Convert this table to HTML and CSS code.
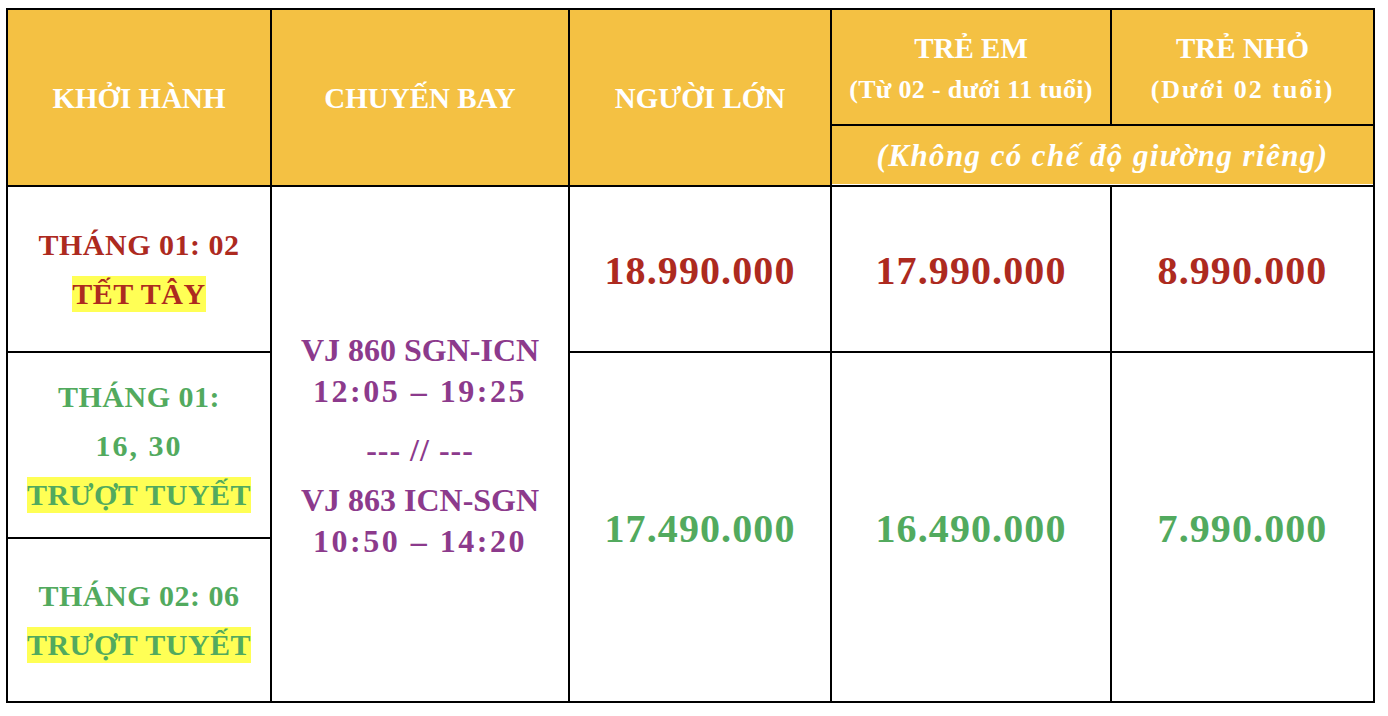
FILE: index.html
```html
<!DOCTYPE html>
<html lang="vi">
<head>
<meta charset="utf-8">
<title>Bảng giá tour</title>
<link rel="stylesheet" href="styles.css">
</head>
<body>
<div class="table">
  <div class="cell head c1 hspan">KHỞI HÀNH</div>
  <div class="cell head c2 hspan">CHUYẾN BAY</div>
  <div class="cell head c3 hspan">NGƯỜI LỚN</div>
  <div class="cell head c4 two">
    <span class="h-main">TRẺ EM</span>
    <span class="h-sub">(Từ 02 - dưới 11 tuổi)</span>
  </div>
  <div class="cell head c5 two">
    <span class="h-main">TRẺ NHỎ</span>
    <span class="h-sub wide">(Dưới 02 tuổi)</span>
  </div>
  <div class="cell head note">(Không có chế độ giường riêng)</div>

  <div class="cell date red r1">
    <span>THÁNG 01: 02</span>
    <span><mark class="hl">TẾT TÂY</mark></span>
  </div>
  <div class="cell flight">
    <div class="leg">VJ 860 SGN-ICN<br><span class="time">12:05 – 19:25</span></div>
    <div class="sep">--- // ---</div>
    <div class="leg">VJ 863 ICN-SGN<br><span class="time">10:50 – 14:20</span></div>
  </div>
  <div class="cell price red c3 r1">18.990.000</div>
  <div class="cell price red c4 r1">17.990.000</div>
  <div class="cell price red c5 r1">8.990.000</div>

  <div class="cell date green r2">
    <span>THÁNG 01:</span>
    <span class="num">16, 30</span>
    <span><mark class="hl">TRƯỢT TUYẾT</mark></span>
  </div>
  <div class="cell price green c3 rlow">17.490.000</div>
  <div class="cell price green c4 rlow">16.490.000</div>
  <div class="cell price green c5 rlow">7.990.000</div>

  <div class="cell date green r3">
    <span>THÁNG 02: 06</span>
    <span><mark class="hl">TRƯỢT TUYẾT</mark></span>
  </div>
</div>
</body>
</html>
```

FILE: styles.css
```css
html, body {
  margin: 0;
  padding: 0;
  background: #ffffff;
}

body {
  font-family: "Liberation Serif", "Times New Roman", serif;
  font-weight: bold;
}

.table {
  margin: 8px 0 0 6px;
  width: 1369px;
  display: grid;
  grid-template-columns: 262px 296px 260px 278px 261px;
  grid-template-rows: 114px 59px 164px 184px 162px;
  gap: 2px;
  padding: 2px;
  box-sizing: border-box;
  background: #000000;
}

.cell {
  background: #ffffff;
  display: flex;
  flex-direction: column;
  align-items: center;
  justify-content: center;
  text-align: center;
}

.head {
  background: #f4c143;
  color: #ffffff;
  font-size: 29px;
}

.c1 { grid-column: 1; }
.c2 { grid-column: 2; }
.c3 { grid-column: 3; }
.c4 { grid-column: 4; }
.c5 { grid-column: 5; }

.hspan { grid-row: 1 / span 2; padding-top: 2px; }

.two { grid-row: 1; line-height: 42px; padding-top: 4px; }

.h-main { font-size: 29px; }
.h-sub { font-size: 26px; letter-spacing: 0.3px; }
.h-sub.wide { letter-spacing: 2px; }

.note {
  grid-column: 4 / span 2;
  grid-row: 2;
  font-style: italic;
  font-size: 31px;
  letter-spacing: 1.4px;
  box-shadow: inset 0 -1px 0 #ffffff;
}

.date {
  grid-column: 1;
  font-size: 30px;
  line-height: 49px;
  letter-spacing: 0.5px;
}

.num { letter-spacing: 2px; }

.r1 { grid-row: 3; }
.r2 { grid-row: 4; }
.r3 { grid-row: 5; }
.rlow { grid-row: 4 / span 2; }

.red { color: #ad2a1f; }
.green { color: #52aa5e; }

.hl {
  background: #ffff55;
  color: inherit;
  padding: 1px 0 2px;
}

.flight {
  grid-column: 2;
  grid-row: 3 / span 3;
  color: #8c3a8c;
  font-size: 32px;
  line-height: 41px;
  padding-top: 4px;
}

.time { letter-spacing: 2.5px; }

.sep {
  margin: 18px 0 9px;
  letter-spacing: 1px;
}

.price {
  font-size: 40px;
  letter-spacing: 1.1px;
  padding-top: 2px;
}
```
